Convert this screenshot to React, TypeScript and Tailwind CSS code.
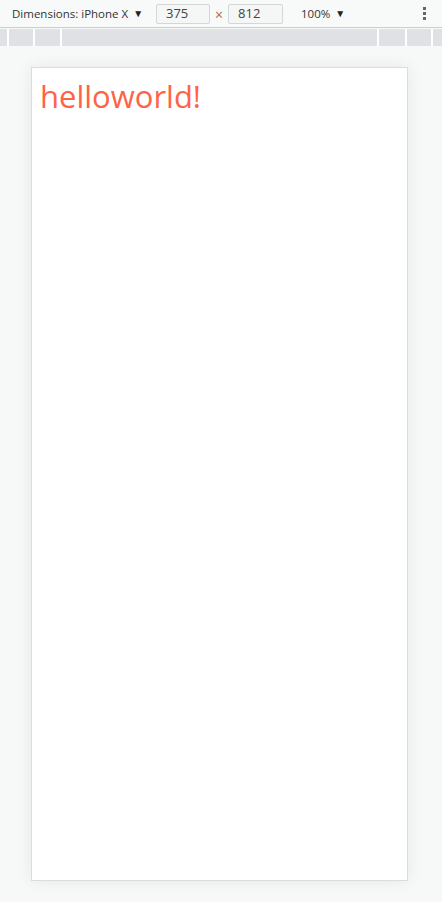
const Caret = () => <span className="ml-[5px] text-[10px] text-[#222]">▼</span>;

export default function App() {
  return (
    <div className="flex h-[902px] w-[442px] flex-col overflow-hidden bg-[#f7f8f8] font-['Open_Sans',sans-serif]">
      {/* Toolbar */}
      <div className="flex h-[28px] items-center border-b border-[#cacdd1] bg-[#f8f9f9] text-[11.5px] text-[#333]">
        <div className="ml-[12px] flex w-[144px] items-center">
          Dimensions: iPhone X
          <Caret />
        </div>
        <div className="flex h-[20px] w-[54px] items-center rounded-[2px] border border-[#d5d6d8] bg-[#f5f6f6] pl-[9px] text-[13px] text-[#444]">
          375
        </div>
        <span className="mx-[5px] pt-[2px] text-[14px] text-[#b5654a]">×</span>
        <div className="flex h-[20px] w-[55px] items-center rounded-[2px] border border-[#d5d6d8] bg-[#f5f6f6] pl-[9px] text-[13px] text-[#444]">
          812
        </div>
        <div className="ml-[18px] flex items-center">
          100%
          <Caret />
        </div>
        <div className="ml-auto mr-[16px] flex flex-col gap-[2px]">
          <span className="h-[3px] w-[3px] bg-[#666]" />
          <span className="h-[3px] w-[3px] bg-[#666]" />
          <span className="h-[3px] w-[3px] bg-[#666]" />
        </div>
      </div>

      {/* Media query ruler */}
      <div className="mt-[1px] flex h-[17px] bg-[#dfe1e5]">
        <div className="w-[7px]" />
        <div className="w-[2px] bg-white" />
        <div className="w-[24px]" />
        <div className="w-[2px] bg-white" />
        <div className="w-[25px]" />
        <div className="w-[2px] bg-white" />
        <div className="flex-1" />
        <div className="w-[2px] bg-white" />
        <div className="w-[26px]" />
        <div className="w-[2px] bg-white" />
        <div className="w-[24px]" />
        <div className="w-[2px] bg-white" />
        <div className="w-[9px]" />
      </div>

      {/* Device viewport */}
      <div className="ml-[31px] mt-[21px] h-[814px] w-[377px] border border-[#dcdcdc] bg-white shadow-[0_0_16px_rgba(0,0,0,0.07)]">
        <div className="pl-[8px] pt-[8px] text-[31px] leading-[40px] text-[#ff6347]">helloworld!</div>
      </div>
    </div>
  );
}
